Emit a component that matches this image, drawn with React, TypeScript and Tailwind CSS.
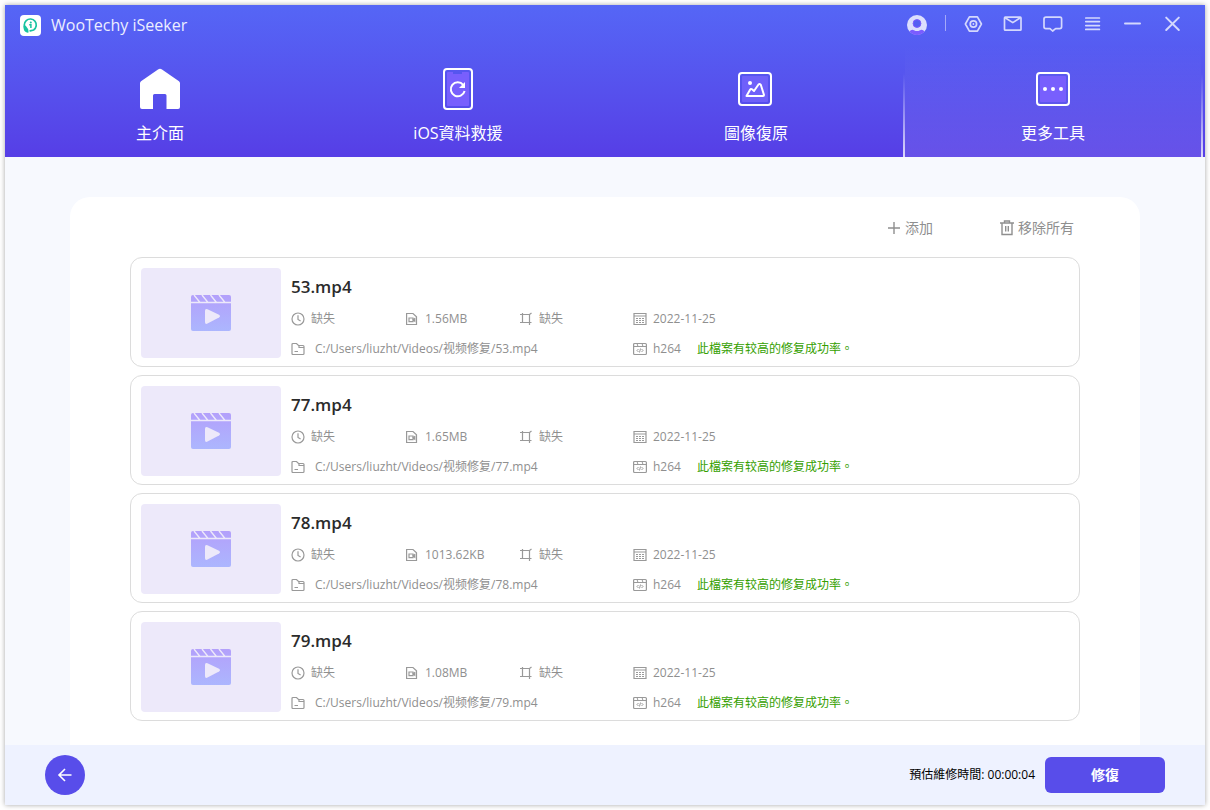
import type { ReactNode } from 'react';

interface VideoFile {
  name: string;
  size: string;
  date: string;
  codec: string;
}

const files: VideoFile[] = [
  { name: '53.mp4', size: '1.56MB', date: '2022-11-25', codec: 'h264' },
  { name: '77.mp4', size: '1.65MB', date: '2022-11-25', codec: 'h264' },
  { name: '78.mp4', size: '1013.62KB', date: '2022-11-25', codec: 'h264' },
  { name: '79.mp4', size: '1.08MB', date: '2022-11-25', codec: 'h264' },
];

const Logo = () => (
  <svg width="21" height="21" viewBox="0 0 21 21" aria-hidden="true">
    <rect width="21" height="21" rx="4" fill="#fff" />
    <path d="M6.2 14.4A6 6 0 1 1 13.6 15L10.2 15.8" fill="none" stroke="#17c3a0" strokeWidth="1.7" strokeLinecap="round" />
    <path d="M3.4 10.8C3.4 15 4.8 18 8.6 17.6L8.2 14.2L5.8 10.8Z" fill="#17c3a0" />
    <circle cx="10.8" cy="7.4" r="1" fill="#17c3a0" />
    <path d="M9.2 9.8H10.9V13" fill="none" stroke="#17c3a0" strokeWidth="1.5" />
  </svg>
);

const LineIcon = ({ children }: { children: ReactNode }) => (
  <svg
    width="20"
    height="20"
    viewBox="0 0 20 20"
    fill="none"
    stroke="#d4d8fd"
    strokeWidth="1.7"
    strokeLinejoin="round"
    strokeLinecap="round"
    aria-hidden="true"
  >
    {children}
  </svg>
);

const windowButtons = [
  {
    label: 'Settings',
    icon: (
      <>
        <path d="M6.4 2.8H14.4L18.4 10L14.4 17.2H6.4L2.4 10Z" />
        <circle cx="10.4" cy="10" r="3.2" />
        <circle cx="10.4" cy="10" r="0.9" fill="#d4d8fd" stroke="none" />
      </>
    ),
  },
  {
    label: 'Mail',
    icon: (
      <>
        <rect x="1.5" y="3.2" width="16.5" height="13" rx="0.8" />
        <path d="M2.5 4L9.8 8.6L17 4" />
      </>
    ),
  },
  {
    label: 'Feedback',
    icon: <path d="M3 3.2H17Q18.6 3.2 18.6 5V12.8Q18.6 14.6 16.8 14.6H12.6L9.6 17L7 14.6H2.8Q1 14.6 1 12.8V5Q1 3.2 3 3.2Z" />,
  },
  { label: 'Menu', icon: <path d="M2.8 4H16.4M2.8 7.6H16.4M2.8 11.6H16.4M2.8 15.4H16.4" /> },
  { label: 'Minimize', icon: <path d="M2 9.5H17" strokeWidth="2" /> },
  { label: 'Close', icon: <path d="M3.2 3.6L15.8 16M15.8 3.6L3.2 16" strokeWidth="2" /> },
];

const TitleBar = () => (
  <div className="flex h-10 items-center pl-[15px] pr-3">
    <Logo />
    <h1 className="ml-2.5 flex-1 text-base text-[#eceeff]">WooTechy iSeeker</h1>
    <button type="button" aria-label="Account" className="mr-[18px]">
      <svg width="20" height="20" viewBox="0 0 20 20" aria-hidden="true">
        <circle cx="10" cy="10" r="10" fill="#dcdffd" />
        <circle cx="10" cy="8.5" r="3.9" fill="#5560f2" stroke="#7b5cff" strokeWidth="1" />
        <path d="M2.4 16.5Q4.5 14 7 15.2Q10 17 13 15.2Q15.5 14 17.6 16.5A10 10 0 0 1 2.4 16.5Z" fill="#7b5cff" />
      </svg>
    </button>
    <span className="mr-[7px] mb-1 h-4 w-px bg-[#a5a9f9]" />
    {windowButtons.map(({ label, icon }) => (
      <button key={label} type="button" aria-label={label} className="flex h-10 w-10 items-center justify-center pb-0.5">
        <LineIcon>{icon}</LineIcon>
      </button>
    ))}
  </div>
);

const tabs = [
  {
    label: '主介面',
    icon: (
      <path
        d="M21 2.5L4 14.2Q3 15 3 16.3V40Q3 42 5 42H16V28.5Q16 27 17.5 27H28Q29.5 27 29.5 28.5V42H41Q43 42 43 40V16.3Q43 15 42 14.2L25 2.5Q23 1.2 21 2.5Z"
        fill="#fff"
      />
    ),
  },
  {
    label: 'iOS資料救援',
    icon: (
      <>
        <rect x="9" y="2" width="28" height="40" rx="3" fill="none" stroke="#fff" strokeWidth="2" />
        <path d="M13 5H18V7H27V5H33Q34 5 34 6V38Q34 39 33 39H13Q12 39 12 38V6Q12 5 13 5Z" fill="#785ffd" />
        <path d="M28.2 17.8A7 7 0 1 0 29.6 24" fill="none" stroke="#fff" strokeWidth="2" />
        <path d="M30 15V21H24Z" fill="#fff" />
      </>
    ),
  },
  {
    label: '圖像復原',
    icon: (
      <>
        <rect x="6" y="6" width="32" height="32" rx="3" fill="none" stroke="#fff" strokeWidth="2" />
        <rect x="9" y="9" width="26" height="26" rx="1" fill="#6f60fa" />
        <circle cx="17" cy="16" r="2" fill="#fff" />
        <path
          d="M13.5 29L17.2 22.5Q18 21.5 19 22.3L21 24L25.5 17.5Q26.8 16.3 27.8 17.8L31 28Q31 29 30 29Z"
          fill="none"
          stroke="#fff"
          strokeWidth="2"
          strokeLinejoin="round"
        />
      </>
    ),
  },
  {
    label: '更多工具',
    icon: (
      <>
        <rect x="7" y="6" width="32" height="32" rx="3" fill="none" stroke="#fff" strokeWidth="2" />
        <rect x="10" y="9" width="26" height="26" rx="1" fill="#785ffd" />
        <circle cx="15" cy="22" r="2" fill="#fff" />
        <circle cx="23" cy="22" r="2" fill="#fff" />
        <circle cx="31" cy="22" r="2" fill="#fff" />
      </>
    ),
  },
];

const TabButton = ({ label, icon, active }: { label: string; icon: ReactNode; active: boolean }) => (
  <button type="button" className={`flex h-28 items-stretch text-base text-white ${active ? '-ml-0.5' : ''}`}>
    {active && <span className="w-0.5 bg-linear-to-b from-transparent from-25% to-white/80" />}
    <span
      className={`flex flex-1 flex-col items-center gap-2.5 pt-[22px] ${active ? 'bg-linear-to-b from-transparent to-white/10' : ''}`}
    >
      <svg width="46" height="44" viewBox="0 0 46 44" aria-hidden="true">
        {icon}
      </svg>
      <span className="leading-6">{label}</span>
    </span>
    {active && <span className="w-0.5 bg-linear-to-b from-transparent from-25% to-white/80" />}
  </button>
);

const MetaIcon = ({ children }: { children: ReactNode }) => (
  <svg width="14" height="14" viewBox="0 0 14 14" fill="none" stroke="#999" strokeWidth="1.2" aria-hidden="true" className="shrink-0">
    {children}
  </svg>
);

const Thumbnail = () => (
  <div className="flex w-[140px] shrink-0 items-center justify-center rounded bg-[#ede9fa]">
    <svg width="40" height="36" viewBox="0 0 40 36" aria-hidden="true">
      <defs>
        <linearGradient id="clip" x1="0" y1="0" x2="0" y2="1">
          <stop offset="0" stopColor="#b3a0fb" />
          <stop offset="1" stopColor="#acb6fe" />
        </linearGradient>
      </defs>
      <rect width="40" height="36" rx="2" fill="url(#clip)" />
      <path d="M0 7.5H40M3 0L9 7.5M11 0L17 7.5M19.5 0L25.5 7.5M28 0L34 7.5" stroke="#ede9fa" strokeWidth="1.4" />
      <path
        d="M14 15.8Q14 13.2 16.5 14.2L28 19.8Q30 21.2 28 22.6L16.5 28.6Q14 29.6 14 27Z"
        fill="#ede9fa"
      />
    </svg>
  </div>
);

const FileCard = ({ file }: { file: VideoFile }) => (
  <li className="flex gap-2.5 rounded-xl border border-[#dcdcdc] px-2.5 pt-2.5 pb-2">
    <Thumbnail />
    <div className="flex h-[90px] min-w-0 flex-1 flex-col text-xs text-[#8f8f8f]">
      <h2 className="mb-[5px] pt-[7px] text-[17px] leading-6 font-semibold text-[#2b2b2b]">{file.name}</h2>
      <div className="-mb-2 grid grid-cols-[114px_114px_114px_1fr] text-xs leading-[30px]">
        <span className="flex items-center gap-1.5">
          <MetaIcon>
            <circle cx="7" cy="7" r="6" />
            <path d="M7 3.2V7.4L9.6 9" />
          </MetaIcon>
          缺失
        </span>
        <span className="flex items-center gap-1.5">
          <MetaIcon>
            <path d="M1.6 1.5H8L11.5 4.8V12.5H1.6Z" />
            <path d="M4 6H8V9.6H4ZM8 7.8L9.8 6.6V9.2Z" />
          </MetaIcon>
          {file.size}
        </span>
        <span className="flex items-center gap-1.5">
          <MetaIcon>
            <path d="M3.5 1V10.5H12.5M1 2.5H10.5V13M1 10.5H3.5M10.5 2.5L12.5 1" />
          </MetaIcon>
          缺失
        </span>
        <span className="flex items-center gap-1.5">
          <MetaIcon>
            <path d="M1 1.5H13V12.5H1ZM1 4H13" />
            <path d="M3 6.5H11M3 8.5H11M3 10.5H11" strokeDasharray="2 1" />
          </MetaIcon>
          {file.date}
        </span>
        <span className="col-span-3 flex items-center gap-2.5">
          <MetaIcon>
            <path d="M2 1.5H5.5L7.5 3.5H12Q13 3.5 13 4.5V11.5Q13 12.5 12 12.5H2Q1 12.5 1 11.5V2.5Q1 1.5 2 1.5ZM8 3.5V5.5H13M3.5 9.5H7" />
          </MetaIcon>
          C:/Users/liuzht/Videos/视频修复/{file.name}
        </span>
        <span className="flex items-center gap-1.5">
          <MetaIcon>
            <rect x="0.6" y="1.5" width="12.8" height="11" rx="1" />
            <path d="M0.5 4.5H13.5M4 1.5L5 4.5M9 1.5L10 4.5M5.5 7L4 8.5L5.5 10M8.5 7L10 8.5L8.5 10M7.5 6.5L6.5 10.5" strokeWidth="1" />
          </MetaIcon>
          {file.codec}
          <span className="ml-2.5 text-[#35a000]">此檔案有较高的修复成功率。</span>
        </span>
      </div>
    </div>
  </li>
);

export default function App() {
  return (
    <div className="flex min-h-screen bg-white p-[5px] font-['Open_Sans','Noto_Sans_CJK_TC',sans-serif]">
      <div className="flex flex-1 flex-col bg-[#f7f9fe] shadow-[0_0_5px_rgba(0,0,0,0.35)]">
        <header className="bg-linear-to-b from-[#5566f6] to-[#563ee6]">
          <TitleBar />
          <nav className="grid grid-cols-4 pl-1.5 pr-0.5">
            {tabs.map(({ label, icon }, index) => (
              <TabButton key={label} label={label} icon={icon} active={index === 3} />
            ))}
          </nav>
        </header>

        <main className="flex flex-1 flex-col px-[65px] pt-10">
          <section className="flex-1 rounded-t-[20px] bg-white px-[60px] pb-6">
            <div className="flex h-[60px] items-center justify-end gap-[67px] pt-0.5 pr-1.5 text-sm text-[#8f8f8f]">
              <button type="button" className="flex items-center gap-1">
                <svg width="14" height="14" viewBox="0 0 14 14" stroke="#8f8f8f" strokeWidth="1.4" aria-hidden="true">
                  <path d="M7 1V13M1 7H13" />
                </svg>
                添加
              </button>
              <button type="button" className="flex items-center gap-1">
                <svg width="14" height="16" viewBox="0 0 14 16" fill="none" stroke="#8f8f8f" strokeWidth="1.4" aria-hidden="true">
                  <path d="M0 3H14M4.5 3V1H9.5V3M2 3V14.5H12V3M5.7 6V11.5M8.3 6V11.5" />
                </svg>
                移除所有
              </button>
            </div>
            <ul className="flex flex-col gap-2">
              {files.map((file) => (
                <FileCard key={file.name} file={file} />
              ))}
            </ul>
          </section>
        </main>

        <footer className="flex h-[60px] items-center gap-2.5 bg-[#eef2ff] px-10">
          <button type="button" aria-label="Back" className="mr-auto flex h-10 w-10 items-center justify-center rounded-full bg-[#584dea]">
            <svg width="16" height="16" viewBox="0 0 16 16" fill="none" stroke="#fff" strokeWidth="1.6" aria-hidden="true">
              <path d="M14.5 8H2M8 2L2 8L8 14" />
            </svg>
          </button>
          <p className="text-xs text-black">預估維修時間: 00:00:04</p>
          <button type="button" className="h-9 w-[120px] rounded-md bg-[#584dea] text-sm font-bold text-white">
            修復
          </button>
        </footer>
      </div>
    </div>
  );
}
